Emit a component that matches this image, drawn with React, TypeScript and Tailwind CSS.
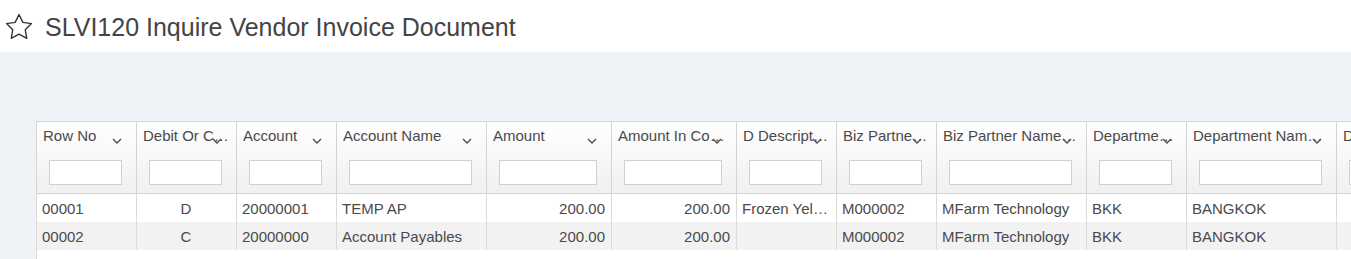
const columns = [
  { key: 'rowNo', label: 'Row No', w: 'w-[100px]', align: 'text-left' },
  { key: 'dc', label: 'Debit Or Credit', w: 'w-[100px]', align: 'text-center' },
  { key: 'account', label: 'Account', w: 'w-[100px]', align: 'text-left' },
  { key: 'accountName', label: 'Account Name', w: 'w-[150px]', align: 'text-left' },
  { key: 'amount', label: 'Amount', w: 'w-[125px]', align: 'text-right' },
  { key: 'amountCo', label: 'Amount In Company Currency', w: 'w-[125px]', align: 'text-right' },
  { key: 'desc', label: 'D Description', w: 'w-[100px]', align: 'text-left' },
  { key: 'bpCode', label: 'Biz Partner Code', w: 'w-[100px]', align: 'text-left' },
  { key: 'bpName', label: 'Biz Partner Name Local', w: 'w-[150px]', align: 'text-left' },
  { key: 'deptCode', label: 'Department Code', w: 'w-[100px]', align: 'text-left' },
  { key: 'deptName', label: 'Department Name Local', w: 'w-[150px]', align: 'text-left' },
  { key: 'division', label: 'Division', w: 'w-[150px]', align: 'text-left' },
]

const rows: Record<string, string>[] = [
  {
    rowNo: '00001',
    dc: 'D',
    account: '20000001',
    accountName: 'TEMP AP',
    amount: '200.00',
    amountCo: '200.00',
    desc: 'Frozen Yellow Corn',
    bpCode: 'M000002',
    bpName: 'MFarm Technology',
    deptCode: 'BKK',
    deptName: 'BANGKOK',
    division: '',
  },
  {
    rowNo: '00002',
    dc: 'C',
    account: '20000000',
    accountName: 'Account Payables',
    amount: '200.00',
    amountCo: '200.00',
    desc: '',
    bpCode: 'M000002',
    bpName: 'MFarm Technology',
    deptCode: 'BKK',
    deptName: 'BANGKOK',
    division: '',
  },
]

const Chevron = () => (
  <svg width="10" height="6" viewBox="0 0 10 6" className="absolute right-[14px] top-[16px]">
    <polyline points="1,1 5,5 9,1" fill="none" stroke="#4a4a4a" strokeWidth="1.3" />
  </svg>
)

const Star = () => (
  <svg width="30" height="30" viewBox="0 0 24 24" className="shrink-0">
    <polygon
      points="12,2 15.09,8.26 22,9.27 17,14.14 18.18,21.02 12,17.77 5.82,21.02 7,14.14 2,9.27 8.91,8.26"
      fill="none"
      stroke="#333"
      strokeWidth="1.1"
      strokeLinejoin="round"
    />
  </svg>
)

export default function App() {
  return (
    <div className="flex h-[259px] w-[1351px] flex-col overflow-hidden bg-white font-['Liberation_Sans',Arial,sans-serif] text-[#4a4a4a]">
      <div className="flex h-[52px] shrink-0 items-center gap-[11px] pl-[4px] pt-[2px]">
        <Star />
        <h1 className="text-[25px] leading-[30px] text-[#444]">SLVI120 Inquire Vendor Invoice Document</h1>
      </div>

      <div className="flex-1 overflow-hidden bg-[#eff2f7] pl-[36px] pt-[69px]">
        <div className="h-full w-max border-t border-[#d4d4d4] bg-white">
          <div className="flex border-b border-[#d4d4d4]">
            {columns.map((c) => (
              <div
                key={c.key}
                className={`${c.w} relative h-[71px] shrink-0 border-l border-[#d4d4d4] bg-linear-to-b from-white to-[#f0f0f0] pt-[4px]`}
              >
                <div className="truncate pl-[6px] pr-[7px] text-[15px] leading-[20px]">{c.label}</div>
                <Chevron />
                <div className="ml-[12px] mt-[14px] h-[25px] w-[calc(100%-26px)] border border-[#d0d0d0] bg-white" />
              </div>
            ))}
          </div>

          {rows.map((r, i) => (
            <div key={i} className={`flex ${i % 2 ? 'bg-[#f2f2f2]' : 'bg-white'}`}>
              {columns.map((c) => (
                <div
                  key={c.key}
                  className={`${c.w} ${c.align} h-[28px] shrink-0 truncate border-l border-[#dadada] pl-[5px] pr-[6px] pt-[1px] text-[15px] leading-[28px]`}
                >
                  {r[c.key]}
                </div>
              ))}
            </div>
          ))}

          {/* empty body below the rows keeps the left border */}
          <div className="flex h-full">
            <div className="h-full border-l border-[#dadada]" />
          </div>
        </div>
      </div>
    </div>
  )
}
